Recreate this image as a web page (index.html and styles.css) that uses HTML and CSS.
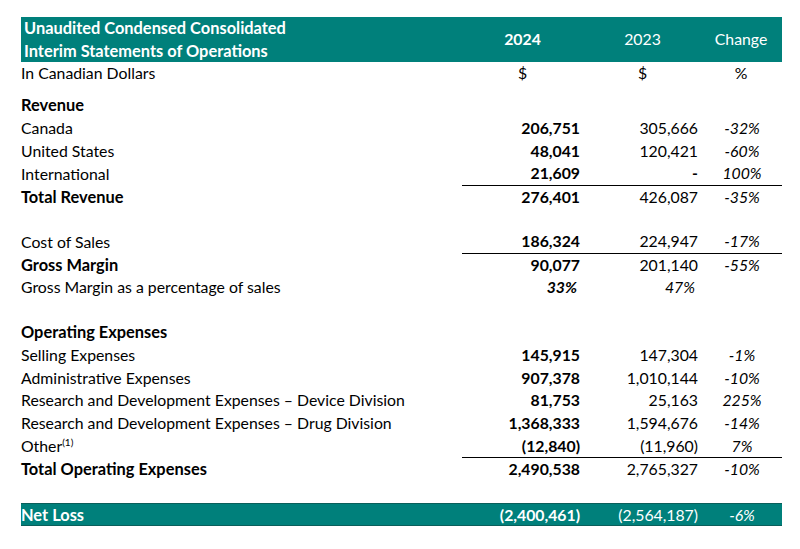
FILE: index.html
```html
<!DOCTYPE html>
<html>
<head>
<meta charset="utf-8">
<link rel="stylesheet" href="styles.css">
</head>
<body>
<div class="page">
<table class="fs">
  <colgroup>
    <col class="c-label"><col class="c-cur"><col class="c-prev"><col class="c-chg">
  </colgroup>
  <thead>
    <tr class="hd">
      <th class="title">Unaudited Condensed Consolidated<br>Interim Statements of Operations</th>
      <th class="yr bold">2024</th>
      <th class="yr">2023</th>
      <th class="yr">Change</th>
    </tr>
  </thead>
  <tbody>
    <tr><td class="lbl">In Canadian Dollars</td><td class="unit">$</td><td class="unit">$</td><td class="unit">%</td></tr>
    <tr class="gap"><td colspan="4"></td></tr>
    <tr><td class="lbl b">Revenue</td><td></td><td></td><td></td></tr>
    <tr><td class="lbl">Canada</td><td class="n b">206,751</td><td class="n">305,666</td><td class="p">-32%</td></tr>
    <tr><td class="lbl">United States</td><td class="n b">48,041</td><td class="n">120,421</td><td class="p">-60%</td></tr>
    <tr><td class="lbl">International</td><td class="n b">21,609</td><td class="n dash">-</td><td class="p">100%</td></tr>
    <tr class="tot"><td class="lbl b">Total Revenue</td><td class="n b">276,401</td><td class="n">426,087</td><td class="p">-35%</td></tr>
    <tr class="blank"><td colspan="4"></td></tr>
    <tr><td class="lbl">Cost of Sales</td><td class="n b">186,324</td><td class="n">224,947</td><td class="p">-17%</td></tr>
    <tr class="tot"><td class="lbl b">Gross Margin</td><td class="n b">90,077</td><td class="n">201,140</td><td class="p">-55%</td></tr>
    <tr><td class="lbl">Gross Margin as a percentage of sales</td><td class="n b i ind">33%</td><td class="n i ind">47%</td><td></td></tr>
    <tr class="blank"><td colspan="4"></td></tr>
    <tr><td class="lbl b">Operating Expenses</td><td></td><td></td><td></td></tr>
    <tr><td class="lbl">Selling Expenses</td><td class="n b">145,915</td><td class="n">147,304</td><td class="p">-1%</td></tr>
    <tr><td class="lbl">Administrative Expenses</td><td class="n b">907,378</td><td class="n">1,010,144</td><td class="p">-10%</td></tr>
    <tr><td class="lbl">Research and Development Expenses – Device Division</td><td class="n b">81,753</td><td class="n">25,163</td><td class="p">225%</td></tr>
    <tr><td class="lbl">Research and Development Expenses – Drug Division</td><td class="n b">1,368,333</td><td class="n">1,594,676</td><td class="p">-14%</td></tr>
    <tr><td class="lbl">Other<sup>(1)</sup></td><td class="n b">(12,840)</td><td class="n">(11,960)</td><td class="p">7%</td></tr>
    <tr class="tot"><td class="lbl b">Total Operating Expenses</td><td class="n b">2,490,538</td><td class="n">2,765,327</td><td class="p">-10%</td></tr>
    <tr class="blank"><td colspan="4"></td></tr>
    <tr class="net"><td class="lbl b">Net Loss</td><td class="n b">(2,400,461)</td><td class="n">(2,564,187)</td><td class="p">-6%</td></tr>
  </tbody>
</table>
</div>
</body>
</html>
```

FILE: styles.css
```css
html, body {
  margin: 0;
  padding: 0;
  background: #ffffff;
}

.page {
  padding: 17px 0 0 21px;
  font-family: "Lato", "Open Sans", sans-serif;
  font-size: 15.8px;
  color: #000000;
}

.fs {
  border-collapse: collapse;
  table-layout: fixed;
  width: 761px;
}

.c-label { width: 441px; }
.c-cur { width: 121px; }
.c-prev { width: 119px; }
.c-chg { width: 80px; }

.fs th, .fs td {
  padding: 0;
  height: 22.7px;
  line-height: 22.7px;
  white-space: nowrap;
}

.hd th {
  background: #00807b;
  color: #ffffff;
  font-weight: 400;
  height: 45px;
}

.hd .title {
  text-align: left;
  font-weight: 700;
  font-size: 16.4px;
  line-height: 22.5px;
  padding-left: 3px;
}

.hd .yr {
  text-align: center;
}

.hd th:nth-child(4) { padding-right: 2px; }

.hd .bold { font-weight: 700; }

.lbl {
  text-align: left;
  padding-left: 3px;
}

.b { font-weight: 700; }
.lbl.b { font-size: 16.4px; }
.i { font-style: italic; }

.unit {
  text-align: center;
}
.fs td.unit:nth-child(4) { padding-right: 2px; }

.n { text-align: right; }
.fs td.n:nth-child(2) { padding-right: 3px; }
.fs td.n:nth-child(3) { padding-right: 4px; }
.fs td.n.ind:nth-child(2) { padding-right: 6px; }
.fs td.n.ind:nth-child(3) { padding-right: 7px; }
.fs td.dash { font-weight: 700; padding-right: 4px; }

.p {
  text-align: center;
  font-style: italic;
  padding-right: 6px;
}

.gap td { height: 9.5px; line-height: 9.5px; }

.fs .tot td {
  height: 21.7px;
  line-height: 21.7px;
}
.tot td:not(:first-child) {
  border-top: 1px solid #000000;
}

.fs .net td {
  height: 21px;
  line-height: 21px;
  background: #00807b;
  color: #ffffff;
  border-top: 1px solid #0a5f5b;
  border-bottom: 1px solid #0a5f5b;
}

sup {
  font-size: 10px;
  line-height: 0;
  vertical-align: 6px;
}
```
